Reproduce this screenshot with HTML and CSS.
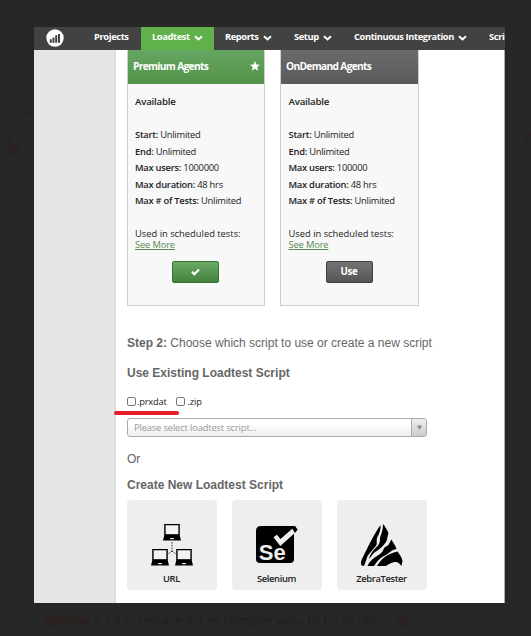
FILE: index.html
```html
<!DOCTYPE html>
<html lang="en">
<head>
<meta charset="utf-8">
<title>Loadtest</title>
<link rel="stylesheet" href="styles.css">
</head>
<body>
<svg width="0" height="0" class="defs" aria-hidden="true">
  <symbol id="chevron" viewBox="0 0 9 6"><path d="M1 1.2 4.5 4.4 8 1.2" fill="none" stroke="#fff" stroke-width="2"/></symbol>
  <symbol id="laptop" viewBox="0 0 19 18"><path d="M2 .5h15v11H2z" fill="#f4f4f4" stroke="#000" stroke-width="1.5"/><path d="M1.5 11.5h16L19 17.5H0z"/><path d="M7.5 15.5h4" stroke="#fff" stroke-width="1.2"/></symbol>
</svg>
<span class="ghost ghost-top">reset a load test end</span>
<span class="ghost ghost-a">A</span>
<span class="ghost ghost-tag">AG</span>
<span class="ghost ghost-dot"></span>
<span class="ghost ghost-copy">©</span>
<main class="window">
  <header class="topbar">
    <svg class="logo" viewBox="0 0 18 18"><circle cx="9" cy="9" r="8.7" fill="#fff"/><path d="M4.8 10.3v3.5M7.5 8.4v5.4M10.2 6.2v7.6M13 5v8.800" stroke="#424242" stroke-width="2"/></svg>
    <nav class="nav">
      <a class="nav-item projects"><span>Projects</span></a>
      <a class="nav-item loadtest"><span>Loadtest</span><svg class="chev"><use href="#chevron"/></svg></a>
      <a class="nav-item reports"><span>Reports</span><svg class="chev"><use href="#chevron"/></svg></a>
      <a class="nav-item setup"><span>Setup</span><svg class="chev"><use href="#chevron"/></svg></a>
      <a class="nav-item integration"><span>Continuous Integration</span><svg class="chev"><use href="#chevron"/></svg></a>
      <a class="nav-item"><span>Scripts</span></a>
    </nav>
  </header>
  <div class="page">
    <aside class="sidebar"></aside>
    <section class="content">
      <div class="agents">
        <article class="agent">
          <h2 class="agent-title premium">Premium Agents<svg class="star" viewBox="0 0 10 10"><path d="m5 0 1.4 3.4 3.6.3-2.7 2.4.8 3.6L5 7.8 1.9 9.7l.8-3.6L0 3.7l3.6-.3z" fill="#fff"/></svg></h2>
          <div class="agent-body">
            <p class="available">Available</p>
            <ul class="facts">
              <li><b>Start:</b> Unlimited</li>
              <li><b>End:</b> Unlimited</li>
              <li><b>Max users:</b> 1000000</li>
              <li><b>Max duration:</b> 48 hrs</li>
              <li><b>Max # of Tests:</b> Unlimited</li>
            </ul>
            <p class="used">Used in scheduled tests:</p>
            <a class="more">See More</a>
            <button class="btn btn-green" aria-label="Selected"><svg width="9" height="8" viewBox="0 0 9 8"><path d="m1 3.8 2.3 2.4L8 1.4" fill="none" stroke="#fff" stroke-width="2.2"/></svg></button>
          </div>
        </article>
        <article class="agent second">
          <h2 class="agent-title ondemand">OnDemand Agents</h2>
          <div class="agent-body">
            <p class="available">Available</p>
            <ul class="facts">
              <li><b>Start:</b> Unlimited</li>
              <li><b>End:</b> Unlimited</li>
              <li><b>Max users:</b> 100000</li>
              <li><b>Max duration:</b> 48 hrs</li>
              <li><b>Max # of Tests:</b> Unlimited</li>
            </ul>
            <p class="used">Used in scheduled tests:</p>
            <a class="more">See More</a>
            <button class="btn btn-gray">Use</button>
          </div>
        </article>
      </div>
      <p class="step"><b>Step 2:</b> <span>Choose which script to use or create a new script</span></p>
      <h3 class="existing">Use Existing Loadtest Script</h3>
      <div class="checks">
        <label><i class="box"></i><span>.prxdat</span></label>
        <label><i class="box"></i><span>.zip</span></label>
      </div>
      <div class="marker"></div>
      <div class="select"><span>Please select loadtest script...</span><i class="drop"><svg width="5" height="5" viewBox="0 0 5 5"><path d="M0 .5h5L2.5 5z" fill="#888"/></svg></i></div>
      <p class="or">Or</p>
      <h3 class="create">Create New Loadtest Script</h3>
      <div class="tiles">
        <a class="tile">
          <svg viewBox="0 0 90 72"><use href="#laptop" x="36" y="24" width="18" height="17"/><use href="#laptop" x="24" y="49" width="18" height="17"/><use href="#laptop" x="48" y="49" width="18" height="17"/><path d="M45 42v9m0 0-4 3m4-3 4 3" fill="none" stroke="#333" stroke-width="1" stroke-dasharray="1.6 1.2"/></svg>
          <span>URL</span>
        </a>
        <a class="tile">
          <svg viewBox="0 0 90 72"><path d="M29 26h33v33q0 4-4 4H28q-4 0-4-4V31q0-5 5-5z"/><path d="m41.5 37.2 3.4-2.5 3.6 4.3L62 27.2l3 3.7L48.3 46z" fill="#eee"/><path d="m60 28 3-2.3 2.6 4-2.7 3.2z"/><text x="26.8" y="59.5" class="se">Se</text></svg>
          <span>Selenium</span>
        </a>
        <a class="tile">
          <svg viewBox="0 0 90 72"><path d="M43.5 25c.5 5-1.500 9-3.500 13-1 4 1 6-2 9-4 5-8 8-8.500 12.500L27 66l-2.500-.5c-1-2-.5-5 1-7.500C31 47 37 34 43.500 25z"/><path d="M46 24c2 2 4 6 5.500 9-1.500 4-.5 7-4 11-3.500 4-6 6-9.500 8-2.500 2-4 5-6 7 .5-4 3-7 5.500-10 3-3 5-4 5.500-9-.5-4 3-7 3-16z"/><path d="M54.500 39.500c1 2.500 4 5.500 5 9.500-6 1-8 5-12.500 7-5 2.500-7 6-10 10h-6.500c2-5 6-8 11-11 6-3 4-7 7.500-8.500 3.500-1 3.500-4.500 5.500-7z"/><path d="M60.500 51.500c2 3 4.500 6 5 9.500l-1 5c-2-2.500-3.500-4.500-7-4-4 1-6 2-8.500 4h-9c5-8 10-12 20.500-14.500z"/></svg>
          <span>ZebraTester</span>
        </a>
      </div>
    </section>
  </div>
</main>
<footer class="caption"><b>Aparna</b><span>6.14 ki release list m compile wala to ha hi nhi</span><em>@</em></footer>
</body>
</html>
```

FILE: styles.css
```css
* { box-sizing: border-box; }
body {
  margin: 0;
  width: 531px;
  height: 636px;
  overflow: hidden;
  padding-top: 27px;
  background: #272727;
  font: 9.35px "Open Sans", sans-serif;
  color: #222;
}
p, h2, h3, ul { margin: 0; padding: 0; }
ul { list-style: none; }
b { font-weight: 600; }
.defs { position: absolute; }

.ghost { position: absolute; color: #222; font-size: 12px; line-height: 12px; }
.ghost-top { left: 44px; top: -8px; color: #232323; }
.ghost-a { left: 26px; top: 106px; }
.ghost-tag { left: -4px; top: 134px; }
.ghost-dot { left: 9px; top: 145px; width: 10px; height: 10px; border-radius: 50%; background: #2e2021; }
.ghost-copy { left: 523px; top: 133px; font-size: 16px; color: #2b2020; }

.window { margin-left: 34px; width: 471px; height: 576px; overflow: hidden; background: #fff; }
.topbar { display: flex; height: 23px; background: #424242; }
.logo { flex: none; width: 18px; height: 18px; margin: 2px 0 0 12px; }
.nav { display: flex; margin-left: 19px; }
.nav-item {
  display: flex;
  flex: none;
  align-items: center;
  gap: 4px;
  height: 23px;
  padding: 0 0 4px 11px;
  color: #fff;
  font-weight: 700;
  font-size: 9.3px;
  letter-spacing: -.38px;
  white-space: nowrap;
}
.chev { flex: none; width: 9px; height: 6px; margin-top: 3px; }
.projects { width: 58px; }
.loadtest { width: 73px; background: #60b14b; }
.reports { width: 69px; }
.setup { width: 60px; }
.integration { width: 135px; }

.page { display: flex; height: 553px; }
.sidebar { width: 82px; background: linear-gradient(90deg, #e6e6e6 96%, #dadada); }
.content { width: 389px; padding-left: 11px; border-right: 1px solid #aaa; }
.agents { display: flex; gap: 15px; }
.agent { width: 138px; height: 256px; border: 1px solid #cfcfcf; border-top: 0; background: #f8f8f8; }
.agent.second { width: 139px; }
.agent-title {
  display: flex;
  align-items: center;
  justify-content: space-between;
  height: 34px;
  padding: 0 4px 3px 5px;
  color: #fff;
  font-size: 10.2px;
  font-weight: 700;
  letter-spacing: -.67px;
}
.premium { background: linear-gradient(#66a663, #529249); }
.ondemand { background: linear-gradient(#6b6b6b, #5a5a5a); }
.star { width: 10px; height: 10px; }
.agent-body { padding: 11px 7px 0; }
.second .agent-body { padding-left: 7.5px; }
.available { height: 14px; line-height: 14px; font-size: 9.7px; font-weight: 600; letter-spacing: -.2px; }
.facts { margin-top: 18px; letter-spacing: -.25px; }
.facts li { height: 16.6px; line-height: 16.6px; white-space: nowrap; }
.used { margin-top: 18px; height: 12px; line-height: 12px; }
.more { display: block; width: max-content; height: 11px; line-height: 10px; color: #558b52; text-decoration: underline; letter-spacing: -.15px; }
.btn {
  display: flex;
  align-items: center;
  justify-content: center;
  width: 47px;
  height: 22px;
  margin: 10px 0 0 37px;
  padding: 0;
  border-radius: 2px;
  color: #fff;
  font: 700 9.7px "Open Sans", sans-serif;
  letter-spacing: -.3px;
}
.btn-green { border: 1px solid #35752f; background: linear-gradient(#69aa65, #458140); }
.btn-gray { border: 1px solid #3f3f3f; background: linear-gradient(#747474, #555); }

.step, h3, .or { font: 12px/16px "Liberation Sans", sans-serif; color: #666; white-space: nowrap; }
.step b, h3 { font-weight: 700; }
.step { margin-top: 29px; }
.existing { margin-top: 14px; }
.checks { display: flex; gap: 9px; height: 14px; margin-top: 13px; }
.checks label { display: flex; align-items: center; gap: 1px; font-size: 9.3px; letter-spacing: -.2px; }
.checks label + label { gap: 3px; }
.box { width: 9px; height: 9px; border: 1px solid #777; border-radius: 2px; background: #fff; }
.marker { width: 65px; height: 4px; margin: 3px 0 0 -13px; border-radius: 2px; background: #e61b23; }
.select {
  display: flex;
  justify-content: space-between;
  width: 300px;
  height: 19px;
  margin-top: 3px;
  padding-left: 6px;
  border: 1px solid #aaa;
  border-radius: 3px;
  background: linear-gradient(#fff 30%, #eee);
  color: #999;
  line-height: 17px;
  letter-spacing: -.15px;
  overflow: hidden;
}
.drop { display: flex; align-items: center; justify-content: center; width: 15px; border-left: 1px solid #aaa; background: linear-gradient(#eee, #ccc); }
.or { margin-top: 14px; }
.create { margin-top: 10px; }
.tiles { display: flex; gap: 15px; margin-top: 7px; }
.tile { display: block; width: 90px; height: 90px; border-radius: 4px; background: #eee; text-align: center; font-weight: 600; letter-spacing: -.35px; }
.tile svg { display: block; width: 90px; height: 72px; }
.tile span { display: block; padding-right: 1px; line-height: 13px; }
.se { font: 700 22px "Liberation Sans", sans-serif; fill: #eee; letter-spacing: 0; }

.caption { display: flex; align-items: center; height: 33px; padding: 0 0 0 43px; font-size: 13.3px; color: #202020; white-space: nowrap; }
.caption b { width: 51px; color: #2c1e1b; font-weight: 700; letter-spacing: -.3px; }
.caption span { width: 304px; }
.caption em { color: #2c1e1b; font-style: normal; font-weight: 600; }
```
